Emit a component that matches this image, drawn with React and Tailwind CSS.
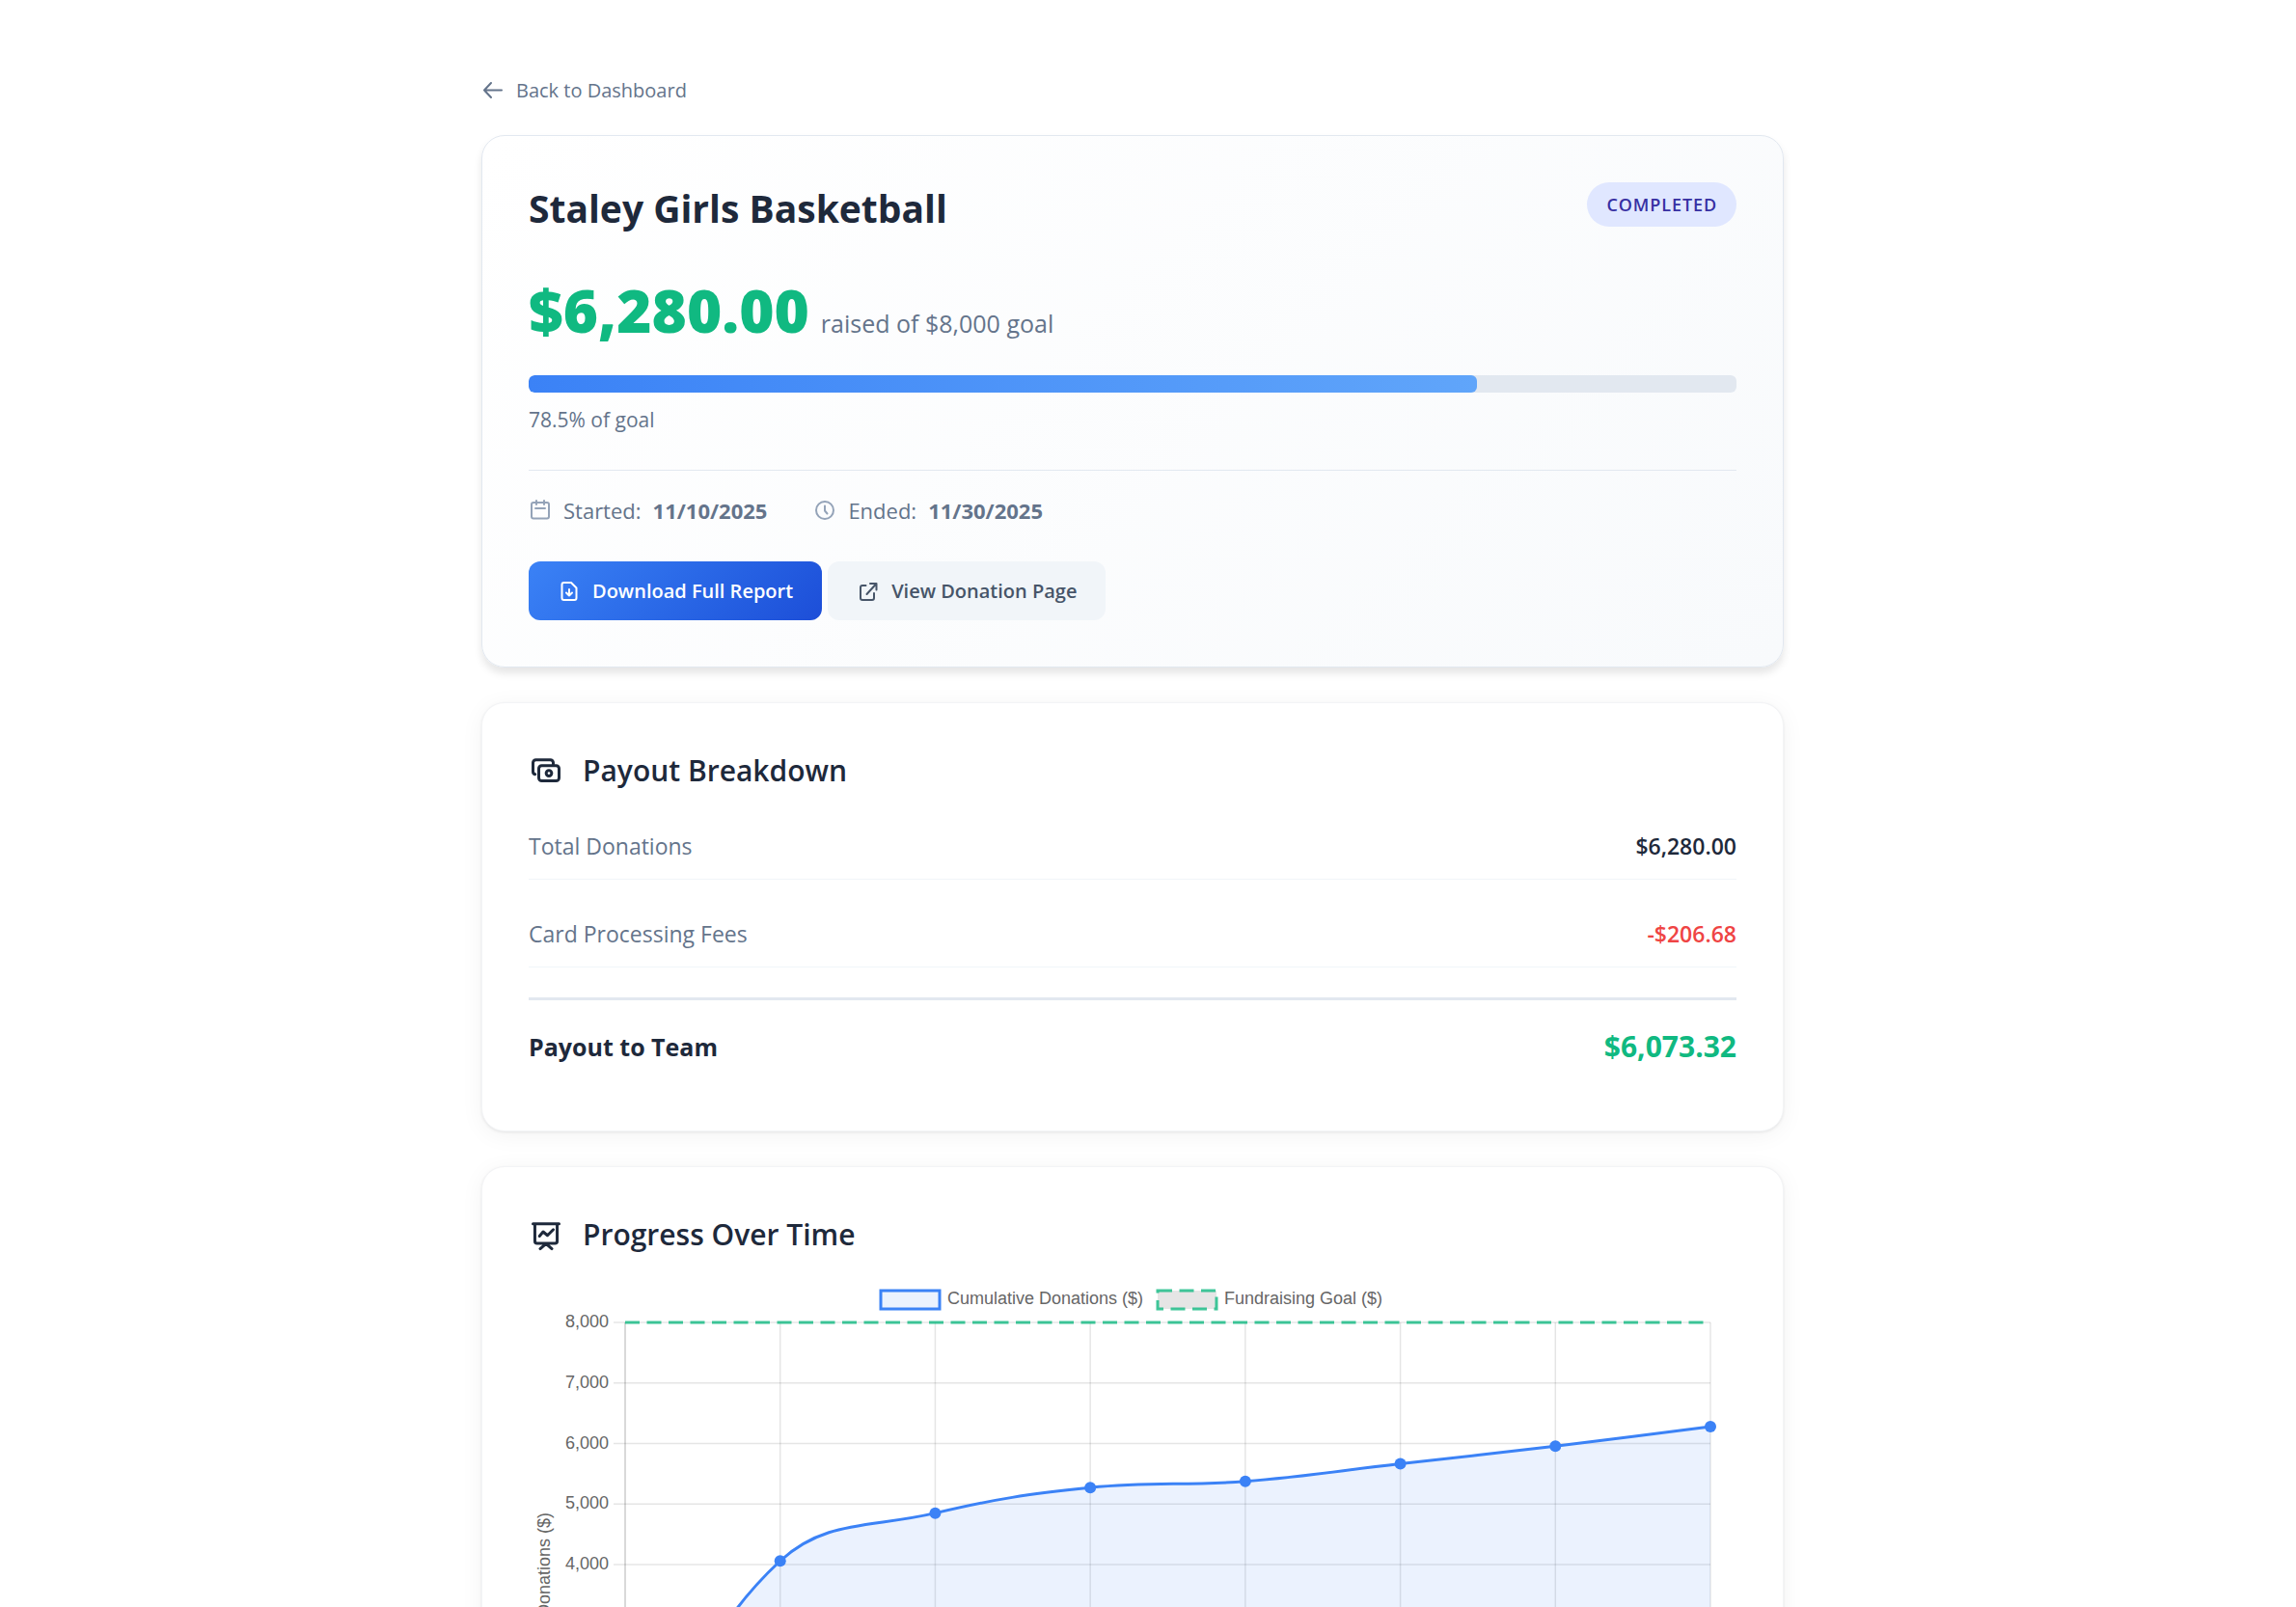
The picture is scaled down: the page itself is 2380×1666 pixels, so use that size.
import React from 'react';

const points = [100, 4060, 4850, 5270, 5375, 5665, 5955, 6280];
const ticks = [8000, 7000, 6000, 5000, 4000, 3000, 2000, 1000, 0];

const plot = { left: 100, right: 1225, top: 49, bottom: 551 };
const TENSION = 0.4;

const toX = (i) => plot.left + (i * (plot.right - plot.left)) / (points.length - 1);
const toY = (v) => plot.bottom - (v / 8000) * (plot.bottom - plot.top);

const coords = points.map((v, i) => ({ x: toX(i), y: toY(v) }));

// smooth curve, handles are weighted by the distance to each neighbour
const handles = coords.map((c, i) => {
  const prev = coords[i - 1] || c;
  const next = coords[i + 1] || c;
  const d1 = Math.hypot(c.x - prev.x, c.y - prev.y);
  const d2 = Math.hypot(next.x - c.x, next.y - c.y);
  const fa = (TENSION * d1) / (d1 + d2);
  const fb = (TENSION * d2) / (d1 + d2);
  const dx = next.x - prev.x;
  const dy = next.y - prev.y;
  return { inX: c.x - fa * dx, inY: c.y - fa * dy, outX: c.x + fb * dx, outY: c.y + fb * dy };
});

const linePath = coords.reduce((d, c, i) => {
  if (i === 0) return `M${c.x} ${c.y}`;
  const a = handles[i - 1];
  const b = handles[i];
  return `${d} C${a.outX} ${a.outY} ${b.inX} ${b.inY} ${c.x} ${c.y}`;
}, '');

const areaPath = `${linePath} L${plot.right} ${plot.bottom} L${plot.left} ${plot.bottom} Z`;

const Icon = ({ className, children }) => (
  <svg
    className={className}
    viewBox="0 0 24 24"
    fill="none"
    stroke="currentColor"
    strokeWidth="2"
    strokeLinecap="round"
    strokeLinejoin="round"
    aria-hidden="true"
  >
    {children}
  </svg>
);

const ProgressChart = () => (
  <svg
    className="block w-full font-['Liberation_Sans',Arial,sans-serif]"
    viewBox="0 0 1252 600"
    fontSize="18"
    fill="#666666"
    role="img"
    aria-label="Cumulative donations over time"
  >
    {/* legend */}
    <rect x="365" y="16" width="61" height="19" fill="#3b82f6" fillOpacity="0.1" />
    <rect x="365" y="16" width="61" height="19" fill="none" stroke="#3b82f6" strokeWidth="3" />
    <text x="434" y="30">Cumulative Donations ($)</text>
    <rect x="652" y="16" width="61" height="19" fill="#000000" fillOpacity="0.1" />
    <path d="M652 16h61v19h-61z" fill="none" stroke="#10b981" strokeOpacity="0.8" strokeWidth="3" strokeDasharray="15 7.5" />
    <text x="721" y="30">Fundraising Goal ($)</text>

    {/* grid */}
    {ticks.map((t) => (
      <g key={t}>
        <path d={`M88 ${toY(t)}H${plot.right}`} stroke="#000000" strokeOpacity="0.1" strokeWidth="1.5" />
        <text x="83" y={toY(t) + 5} textAnchor="end">{t.toLocaleString('en-US')}</text>
      </g>
    ))}
    {coords.map((c, i) => (
      <path
        key={i}
        d={`M${c.x} ${plot.top}V${plot.bottom + 12}`}
        stroke="#000000"
        strokeOpacity={i === 0 ? 0.2 : 0.1}
        strokeWidth="1.5"
      />
    ))}
    <text transform={`translate(22 ${(plot.top + plot.bottom) / 2}) rotate(-90)`} textAnchor="middle">Donations ($)</text>

    {/* series */}
    <path d={areaPath} fill="#3b82f6" fillOpacity="0.1" />
    <path
      d={`M${plot.left} ${plot.top}H${plot.right}`}
      stroke="#10b981"
      strokeOpacity="0.8"
      strokeWidth="3"
      strokeDasharray="15 7.5"
    />
    <path d={linePath} fill="none" stroke="#3b82f6" strokeWidth="3" />
    {coords.map((c, i) => (
      <circle key={i} cx={c.x} cy={c.y} r="6" fill="#3b82f6" />
    ))}
  </svg>
);

const Card = ({ children }) => (
  <section className="bg-white rounded-3xl border border-gray-100 shadow-[0_1px_3px_rgba(0,0,0,0.08),0_4px_24px_rgba(0,0,0,0.05)] p-12">
    {children}
  </section>
);

const CardTitle = ({ icon, children }) => (
  <h2 className="flex items-center gap-5 text-[30px] leading-11 font-semibold text-[#1e293b]">
    {icon}
    {children}
  </h2>
);

export default function App() {
  const raised = 6280;
  const goal = 8000;
  const percent = (raised / goal) * 100;

  return (
    <div className="min-h-screen bg-white pt-20 pb-12 pl-4 pr-12 font-['Open_Sans','Noto_Sans',sans-serif] text-[#64748b]">
      <main className="max-w-[1350px] mx-auto flex flex-col gap-9">
        <div className="flex flex-col gap-8">
          <a href="#dashboard" className="flex items-center gap-3 self-start text-xl">
            <Icon className="w-6 h-6">
              <path d="M21 11.500H3M10 4L3 11.500l7 7.500" />
            </Icon>
            Back to Dashboard
          </a>

          {/* SUMMARY */}
          <section className="rounded-3xl border border-[#e2e8f0] bg-linear-135 from-white to-[#f8fafc] p-12 shadow-[0_6px_9px_rgba(0,0,0,0.1)]">
            <div className="flex items-start justify-between">
              <h1 className="text-[39px] leading-[54px] font-bold text-[#1e293b]">Staley Girls Basketball</h1>
              <span className="rounded-full bg-[#e0e7ff] px-5 py-2 text-lg leading-[30px] font-semibold tracking-wider text-[#3730a3]">
                COMPLETED
              </span>
            </div>

            <p className="mt-9 flex items-baseline gap-3">
              <span className="text-[62px] leading-[84px] font-extrabold text-[#10b981]">$6,280.00</span>
              <span className="text-[25px]">raised of $8,000 goal</span>
            </p>

            <div className="mt-[26px] h-[18px] rounded-md bg-[#e2e8f0] overflow-hidden">
              <div className="h-full rounded-md bg-linear-to-r from-[#3b82f6] to-[#60a5fa]" style={{ width: `${percent}%` }} />
            </div>
            <p className="mt-3 text-[21px] leading-8">{percent}% of goal</p>

            <div className="mt-9 pt-6 border-t border-[#e2e8f0] flex gap-12 text-[22px] leading-[34px]">
              <div className="flex items-center gap-3">
                <Icon className="w-6 h-6 text-[#94a3b8]">
                  <rect x="3" y="4" width="18" height="16.500" rx="2" />
                  <path d="M8 2v4M16 2v4M7 10h10" />
                </Icon>
                <span>Started:</span>
                <strong className="font-bold">11/10/2025</strong>
              </div>
              <div className="flex items-center gap-3">
                <Icon className="w-6 h-6 text-[#94a3b8]">
                  <circle cx="12" cy="12" r="9" />
                  <path d="M12 7.500v5l2.500 3" />
                </Icon>
                <span>Ended:</span>
                <strong className="font-bold">11/30/2025</strong>
              </div>
            </div>

            <div className="mt-9 flex gap-1.5">
              <button type="button" className="flex items-center gap-3 rounded-xl bg-linear-135 from-[#3b82f6] to-[#1d4ed8] px-[30px] py-4 text-xl leading-[29px] font-semibold text-white">
                <Icon className="w-6 h-6">
                  <path d="M6.500 3h7.500l5.500 5.500v10.500a2 2 0 0 1-2 2h-11a2 2 0 0 1-2-2V5a2 2 0 0 1 2-2zM12 10v6.500M9 13.500l3 3 3-3" />
                </Icon>
                Download Full Report
              </button>
              <a href="#donate" className="flex items-center gap-3 rounded-xl bg-[#f1f5f9] px-[30px] py-4 text-xl leading-[29px] font-semibold text-[#475569]">
                <Icon className="w-6 h-6">
                  <path d="M9.500 6H6a2 2 0 0 0-2 2v11a2 2 0 0 0 2 2h10a2 2 0 0 0 2-2v-5M14 4h6.500v6.500M20 4.500L10.500 15" />
                </Icon>
                View Donation Page
              </a>
            </div>
          </section>
        </div>

        {/* PAYOUT */}
        <Card>
          <CardTitle
            icon={
              <Icon className="w-9 h-9">
                <path d="M4.500 14.500A2 2 0 0 1 3 12.500V6.500a2 2 0 0 1 2-2h10a2 2 0 0 1 2 2v1" />
                <rect x="7" y="8.500" width="14" height="10.500" rx="2" />
                <circle cx="14" cy="13.700" r="1.900" />
              </Icon>
            }
          >
            Payout Breakdown
          </CardTitle>
          <dl>
            <div className="mt-[22px] flex items-center justify-between border-b border-[#f1f5f9] py-4 text-[23px] leading-9">
              <dt>Total Donations</dt>
              <dd className="font-semibold text-[#1e293b]">$6,280.00</dd>
            </div>
            <div className="mt-[22px] flex items-center justify-between border-b border-[#f1f5f9] py-4 text-[23px] leading-9">
              <dt>Card Processing Fees</dt>
              <dd className="font-semibold text-[#ef4444]">-$206.68</dd>
            </div>
            <div className="mt-[31px] flex items-center justify-between border-t-3 border-[#e2e8f0] pt-[30px] pb-[21px] leading-9 font-bold">
              <dt className="text-[25px] text-[#1e293b]">Payout to Team</dt>
              <dd className="text-[30px] text-[#10b981]">$6,073.32</dd>
            </div>
          </dl>
        </Card>

        {/* PROGRESS */}
        <Card>
          <CardTitle
            icon={
              <Icon className="w-9 h-9">
                <path d="M3 4.500h18M4.300 4.500V16.500A1.500 1.500 0 0 0 5.800 18h12.400a1.500 1.500 0 0 0 1.500-1.500V4.500M7.500 13l2.500-3 3 2.500 4-4M8 21.700l4-3.500 4 3.500" />
              </Icon>
            }
          >
            Progress Over Time
          </CardTitle>
          <div className="mt-5">
            <ProgressChart />
          </div>
        </Card>
      </main>
    </div>
  );
}
